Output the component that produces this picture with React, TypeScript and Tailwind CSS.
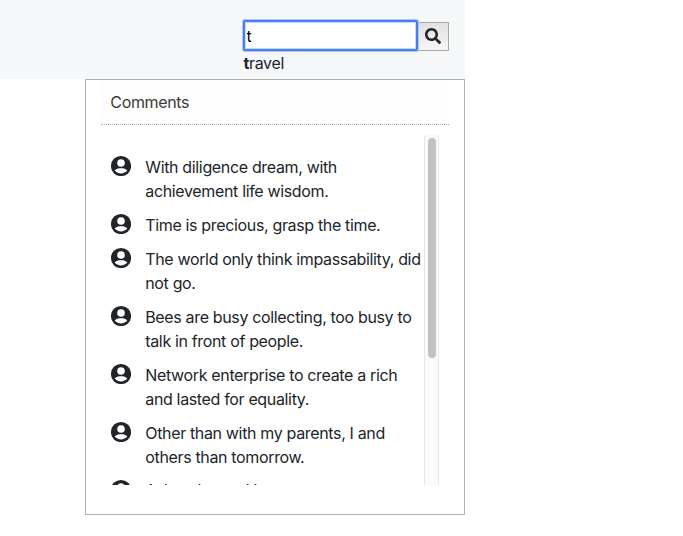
import { FaSearch } from "react-icons/fa";

const comments = [
  ["With diligence dream, with", "achievement life wisdom."],
  ["Time is precious, grasp the time."],
  ["The world only think impassability, did", "not go."],
  ["Bees are busy collecting, too busy to", "talk in front of people."],
  ["Network enterprise to create a rich", "and lasted for equality."],
  ["Other than with my parents, I and", "others than tomorrow."],
  ["Ask as her red house grows on me and"],
];

function UserIcon() {
  return (
    <svg viewBox="-0.5 0 21 21" className="mr-[14px] size-[21px] shrink-0">
      <circle cx="10.5" cy="11" r="10.1" fill="#212529" />
      <circle cx="10.5" cy="8" r="3.8" fill="#fff" />
      <path d="M4.2 15.6C5.5 13.8 7.8 13.2 10.5 13.2s5 .6 6.3 2.4c-1.5 1.9-3.7 2.8-6.3 2.8s-4.8-.9-6.3-2.8z" fill="#fff" />
    </svg>
  );
}

export default function App() {
  return (
    <div className="h-[536px] w-[683px] overflow-hidden bg-white font-['Inter',sans-serif] text-[16px] leading-6 tracking-[-0.345px] text-[#212529]">
      <header className="h-[79px] w-[465px] bg-[#f6f7f9] pt-[20px] pl-[243px]">
        <div className="flex items-center">
          <input
            defaultValue="t"
            className="z-10 h-[31px] w-[175px] rounded-[2px] border-2 border-[#4680ee] bg-white pl-[1.5px] text-black shadow-[0_0_0_1px_#a9c4f6,inset_0_0_0_1px_#c5d8fa] outline-none"
          />
          <button className="mt-[2px] flex h-[29px] w-[31px] items-center justify-center border border-l-0 border-[#a9a9a9] bg-linear-to-b from-[#e2e2e2] to-[#f5f5f5] pr-px">
            <FaSearch className="mb-px size-4" />
          </button>
        </div>
        <div className="h-6 pl-[0.5px]">
          <b>t</b>ravel
        </div>
      </header>
      <main className="ml-[85px] h-[436px] w-[380px] border border-[#b0b1b3] px-[15px]">
        <h2 className="h-[45px] border-b border-dotted border-[#a8a8a8] bg-[#fdfdfd] pt-[10px] pl-[9.3px] text-[#3b3b3b]">
          Comments
        </h2>
        <div className="mt-[10px] flex h-[350px] overflow-hidden">
          <ul className="flex w-[323px] flex-col gap-[10px] pt-5 pl-[9.25px]">
            {comments.map((lines) => (
              <li key={lines[0]} className="group flex shrink-0">
                <UserIcon />
                <div className="whitespace-nowrap group-last:-mt-px">
                  {lines.map((line) => (
                    <div key={line}><span>{line}</span></div>
                  ))}
                </div>
              </li>
            ))}
          </ul>
          <div className="w-[15px] border-x border-[#e8e8e8] bg-[#fafafa] pt-[3px] pl-[3px]">
            <div className="h-[220px] w-2 rounded-full bg-[#c1c1c1]" />
          </div>
        </div>
      </main>
    </div>
  );
}
